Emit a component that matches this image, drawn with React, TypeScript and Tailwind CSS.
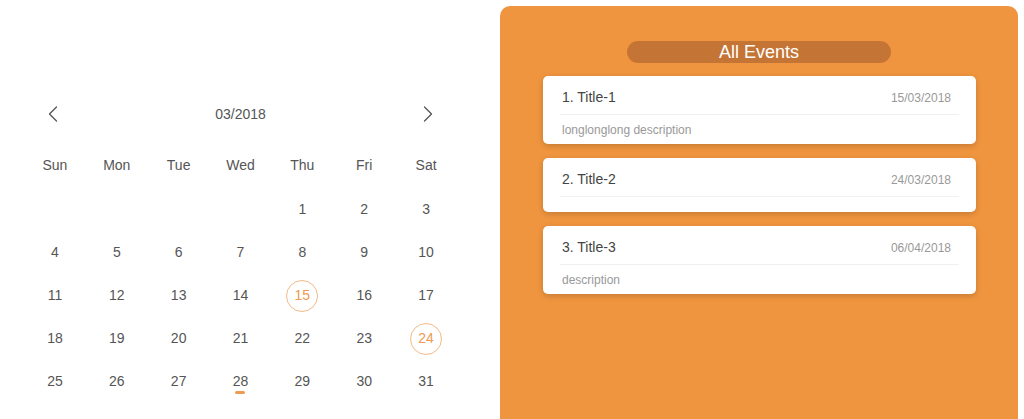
import { ChevronLeft, ChevronRight } from "lucide-react";

const dayNames = ["Sun", "Mon", "Tue", "Wed", "Thu", "Fri", "Sat"];

const events = [
  { id: 1, title: "Title-1", date: "15/03/2018", description: "longlonglong description" },
  { id: 2, title: "Title-2", date: "24/03/2018", description: "" },
  { id: 3, title: "Title-3", date: "06/04/2018", description: "description" },
];

const marked = [15, 24];
const today = 28;

const Calendar = () => {
  // March 2018 starts on a Thursday
  const cells: (number | null)[] = [null, null, null, null];
  for (let d = 1; d <= 31; d++) cells.push(d);

  return (
    <div className="w-[433px]">
      <div className="flex h-[30px] items-center justify-between px-[15px] text-[#555]">
        <ChevronLeft className="size-[28px]" strokeWidth={1.1} />
        <span className="text-[14px]">03/2018</span>
        <ChevronRight className="size-[28px]" strokeWidth={1.1} />
      </div>
      <div className="mt-[21px] grid h-[30px] grid-cols-7 items-center text-center text-[14px] text-[#555]">
        {dayNames.map((n) => (
          <span key={n}>{n}</span>
        ))}
      </div>
      <div className="mt-[8px] grid grid-cols-7 text-[14px] text-[#555]">
        {cells.map((d, i) => (
          <div key={i} className="relative flex h-[43px] items-center justify-center">
            {d && marked.includes(d) ? (
              <span className="flex size-[32px] items-center justify-center rounded-full border border-[#F2BB86] text-[#EE9A52]">
                {d}
              </span>
            ) : (
              <span>{d}</span>
            )}
            {d === today && (
              <span className="absolute left-1/2 top-[31px] h-[3px] w-[10px] -translate-x-1/2 rounded-full bg-[#EE9A52]" />
            )}
          </div>
        ))}
      </div>
    </div>
  );
};

const EventCard = ({ id, title, date, description }: (typeof events)[number]) => {
  return (
    <div className="rounded-[5px] bg-white px-[17px] shadow-[0_2px_6px_rgba(0,0,0,0.18)]">
      <div className="flex h-[39px] items-center justify-between border-b border-[#f0f0f0] pl-[2px] pt-[5px]">
        <span className="text-[14px] text-[#444]">
          {id}. {title}
        </span>
        <span className="pr-[8px] text-[12px] text-[#999]">{date}</span>
      </div>
      {description ? (
        <div className="flex h-[29px] items-center pl-[2px] text-[12px] text-[#999]">{description}</div>
      ) : (
        <div className="h-[15px]" />
      )}
    </div>
  );
};

export default function App() {
  return (
    <div className="flex h-[419px] w-[1024px] overflow-hidden bg-white font-['Liberation_Sans',Arial,sans-serif]">
      <div className="w-[500px] pl-[24px] pt-[99px]">
        <Calendar />
      </div>
      <div className="mt-[6px] w-[518px] rounded-t-[10px] bg-[#F0953F]">
        <div className="mx-auto mt-[35px] flex h-[22px] w-[264px] items-center justify-center rounded-full bg-[#C47536] text-[18px] text-white">
          All Events
        </div>
        <div className="ml-[43px] mt-[13px] flex w-[433px] flex-col gap-[14px]">
          {events.map((e) => (
            <EventCard key={e.id} {...e} />
          ))}
        </div>
      </div>
    </div>
  );
}
